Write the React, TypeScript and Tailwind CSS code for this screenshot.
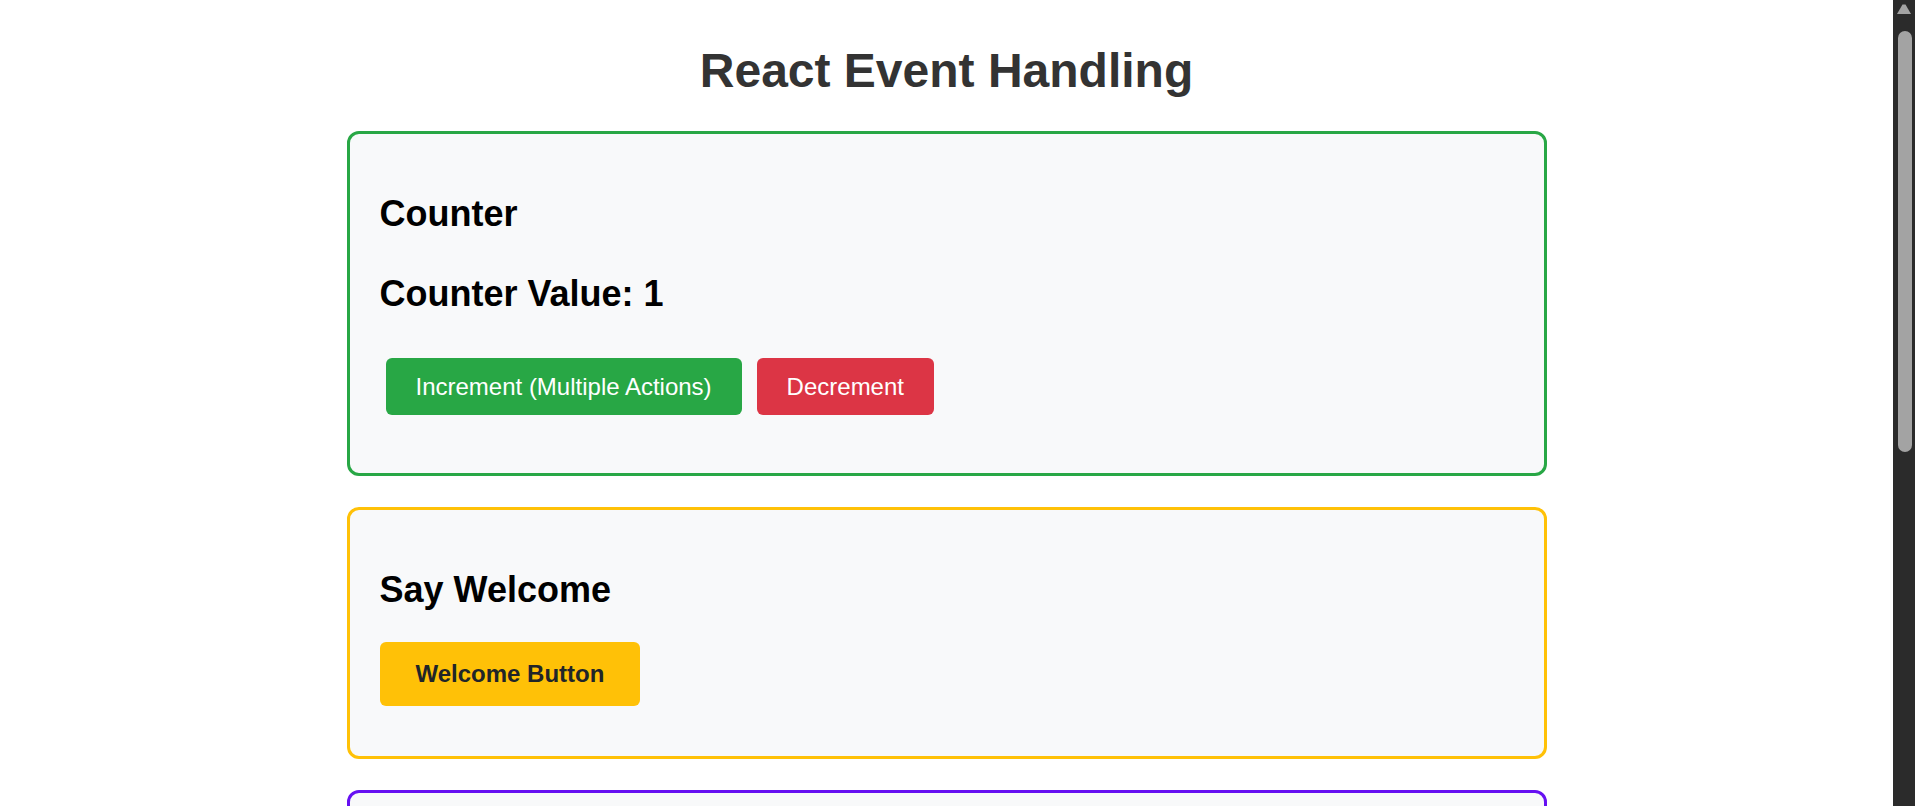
import type { ReactNode } from "react";

const font = "font-['Liberation_Sans',Arial,Helvetica,sans-serif]";

function Card({ border, children, bottom }: { border: string; children: ReactNode; bottom: string }) {
  return (
    <section className={`rounded-[12px] border-[3px] border-solid bg-[#f8f9fa] px-[30px] pt-[59px] ${border} ${bottom}`}>
      {children}
    </section>
  );
}

function Heading({ children, className = "" }: { children: ReactNode; className?: string }) {
  return <h2 className={`text-[36px] font-bold leading-[41px] text-black ${className}`}>{children}</h2>;
}

// window scrollbar as it appears in the screenshot
function ScrollBar() {
  return (
    <aside className="flex h-screen w-[22px] shrink-0 flex-col bg-[#2b2b2b]">
      <svg className="ml-[4px] mt-[4px]" width="14" height="10" viewBox="0 0 14 10" aria-hidden="true">
        <path d="M5.5 0.5 H8.5 L14 10 H0 Z" fill="#a3a3a3" />
      </svg>
      <div className="ml-[5px] mt-[17px] h-[421px] w-[14px] rounded-[7px] bg-[#a3a3a3]" />
    </aside>
  );
}

export default function App() {
  return (
    <div className={`flex h-screen overflow-hidden bg-white ${font}`}>
      <main className="min-w-0 flex-1 pt-[43px]">
        <h1 className="text-center text-[48px] font-bold leading-[55px] text-[#333333]">React Event Handling</h1>

        <div className="mx-auto mt-[33px] flex w-[1200px] flex-col gap-[31px]">
          <Card border="border-[#28a745]" bottom="pb-[58px]">
            <Heading>Counter</Heading>
            <Heading className="mt-[39px]">Counter Value: 1</Heading>
            <div className="mt-[44px] flex gap-[15px] pl-[6px]">
              <button className="rounded-[6px] bg-[#28a745] px-[30px] py-[15px] text-[24px] leading-[27px] text-white">
                Increment (Multiple Actions)
              </button>
              <button className="rounded-[6px] bg-[#dc3545] px-[30px] py-[15px] text-[24px] leading-[27px] text-white">
                Decrement
              </button>
            </div>
          </Card>

          <Card border="border-[#ffc107]" bottom="pb-[50px]">
            <Heading>Say Welcome</Heading>
            <div className="mt-[32px] flex">
              <button className="rounded-[6px] bg-[#ffc107] px-[36px] py-[18px] text-[24px] font-bold leading-[28px] text-[#212529]">
                Welcome Button
              </button>
            </div>
          </Card>

          <Card border="border-[#6610f2]" bottom="pb-[50px]">
            <Heading>Synthetic Event</Heading>
            <div className="mt-[32px] flex">
              <button className="rounded-[6px] bg-[#6610f2] px-[36px] py-[18px] text-[24px] font-bold leading-[28px] text-white">
                OnPress
              </button>
            </div>
          </Card>
        </div>
      </main>
      <ScrollBar />
    </div>
  );
}
